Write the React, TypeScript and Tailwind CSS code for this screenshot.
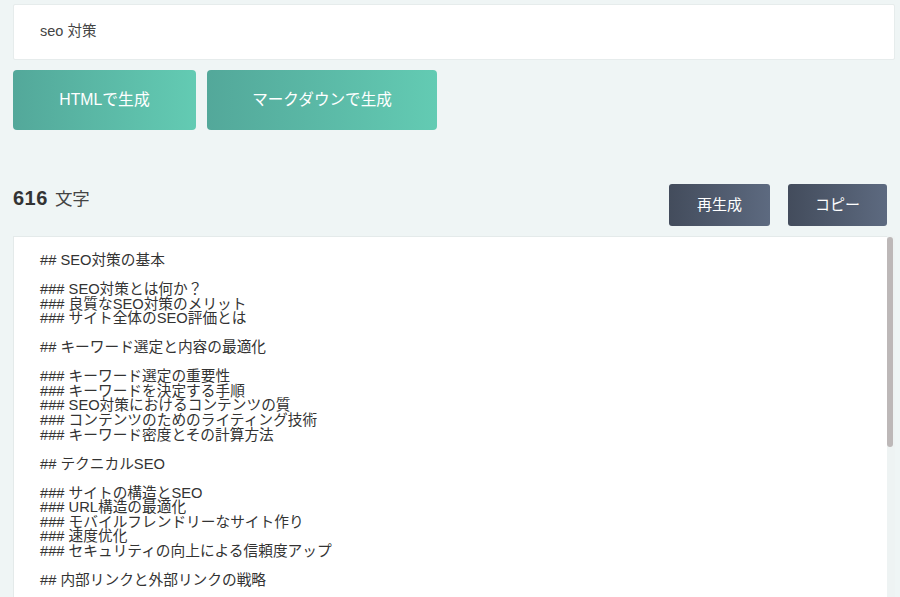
const LINES = [
  "## SEO対策の基本",
  "",
  "### SEO対策とは何か？",
  "### 良質なSEO対策のメリット",
  "### サイト全体のSEO評価とは",
  "",
  "## キーワード選定と内容の最適化",
  "",
  "### キーワード選定の重要性",
  "### キーワードを決定する手順",
  "### SEO対策におけるコンテンツの質",
  "### コンテンツのためのライティング技術",
  "### キーワード密度とその計算方法",
  "",
  "## テクニカルSEO",
  "",
  "### サイトの構造とSEO",
  "### URL構造の最適化",
  "### モバイルフレンドリーなサイト作り",
  "### 速度优化",
  "### セキュリティの向上による信頼度アップ",
  "",
  "## 内部リンクと外部リンクの戦略",
  "",
  "### 内部リンクの効果的な使い方",
  "### 被リンクの獲得方法",
];

export default function App() {
  return (
    <div
      className="w-[900px] h-[597px] overflow-hidden bg-[#eff5f5] text-[#333]"
      style={{ fontFamily: '"Liberation Sans", "Noto Sans CJK JP", sans-serif' }}
    >
      <div className="pt-[4px] pl-[13px] pr-[5px]">
        {/* keyword input */}
        <div className="h-[56px] bg-white border border-[#e6ecec] rounded-[2px] flex items-center pl-[26px] text-[14.5px] text-[#444]">
          seo 対策
        </div>

        {/* generate buttons */}
        <div className="flex gap-[11px] mt-[10px]">
          <button className="w-[183px] h-[60px] rounded-[4px] bg-gradient-to-r from-[#53a89a] to-[#63cbb3] text-white text-[15.8px]">
            HTMLで生成
          </button>
          <button className="w-[230px] h-[60px] rounded-[4px] bg-gradient-to-r from-[#53a89a] to-[#63cbb3] text-white text-[15.6px]">
            マークダウンで生成
          </button>
        </div>

        {/* count + actions */}
        <div className="flex items-start justify-between mt-[54px] pr-[8px]">
          <div className="flex items-baseline gap-[7px] leading-[28px]">
            <span className="text-[20px] font-bold tracking-[0.5px]">616</span>
            <span className="text-[17.5px] text-[#444]">文字</span>
          </div>
          <div className="flex gap-[18px]">
            <button className="w-[101px] h-[42px] rounded-[3px] bg-gradient-to-r from-[#434c5c] to-[#5d6a80] text-white text-[15px]">
              再生成
            </button>
            <button className="w-[99px] h-[42px] rounded-[3px] bg-gradient-to-r from-[#434c5c] to-[#5d6a80] text-white text-[15px]">
              コピー
            </button>
          </div>
        </div>

        {/* output area */}
        <div className="flex mt-[10px] h-[420px]">
          <div className="flex-1 bg-white border border-[#e4eaea] border-r-0 pl-[26px] pt-[16px] overflow-hidden">
            {LINES.map((line, i) => (
              <div key={i} className="text-[14.7px] leading-[14.55px] h-[14.55px] whitespace-pre text-[#333]">
                {line}
              </div>
            ))}
          </div>
          <div className="w-[8px] bg-[#eef3f3] pt-[1px]">
            <div className="w-[6px] h-[210px] rounded-full bg-[#bdb8b8]" />
          </div>
        </div>
      </div>
    </div>
  );
}
